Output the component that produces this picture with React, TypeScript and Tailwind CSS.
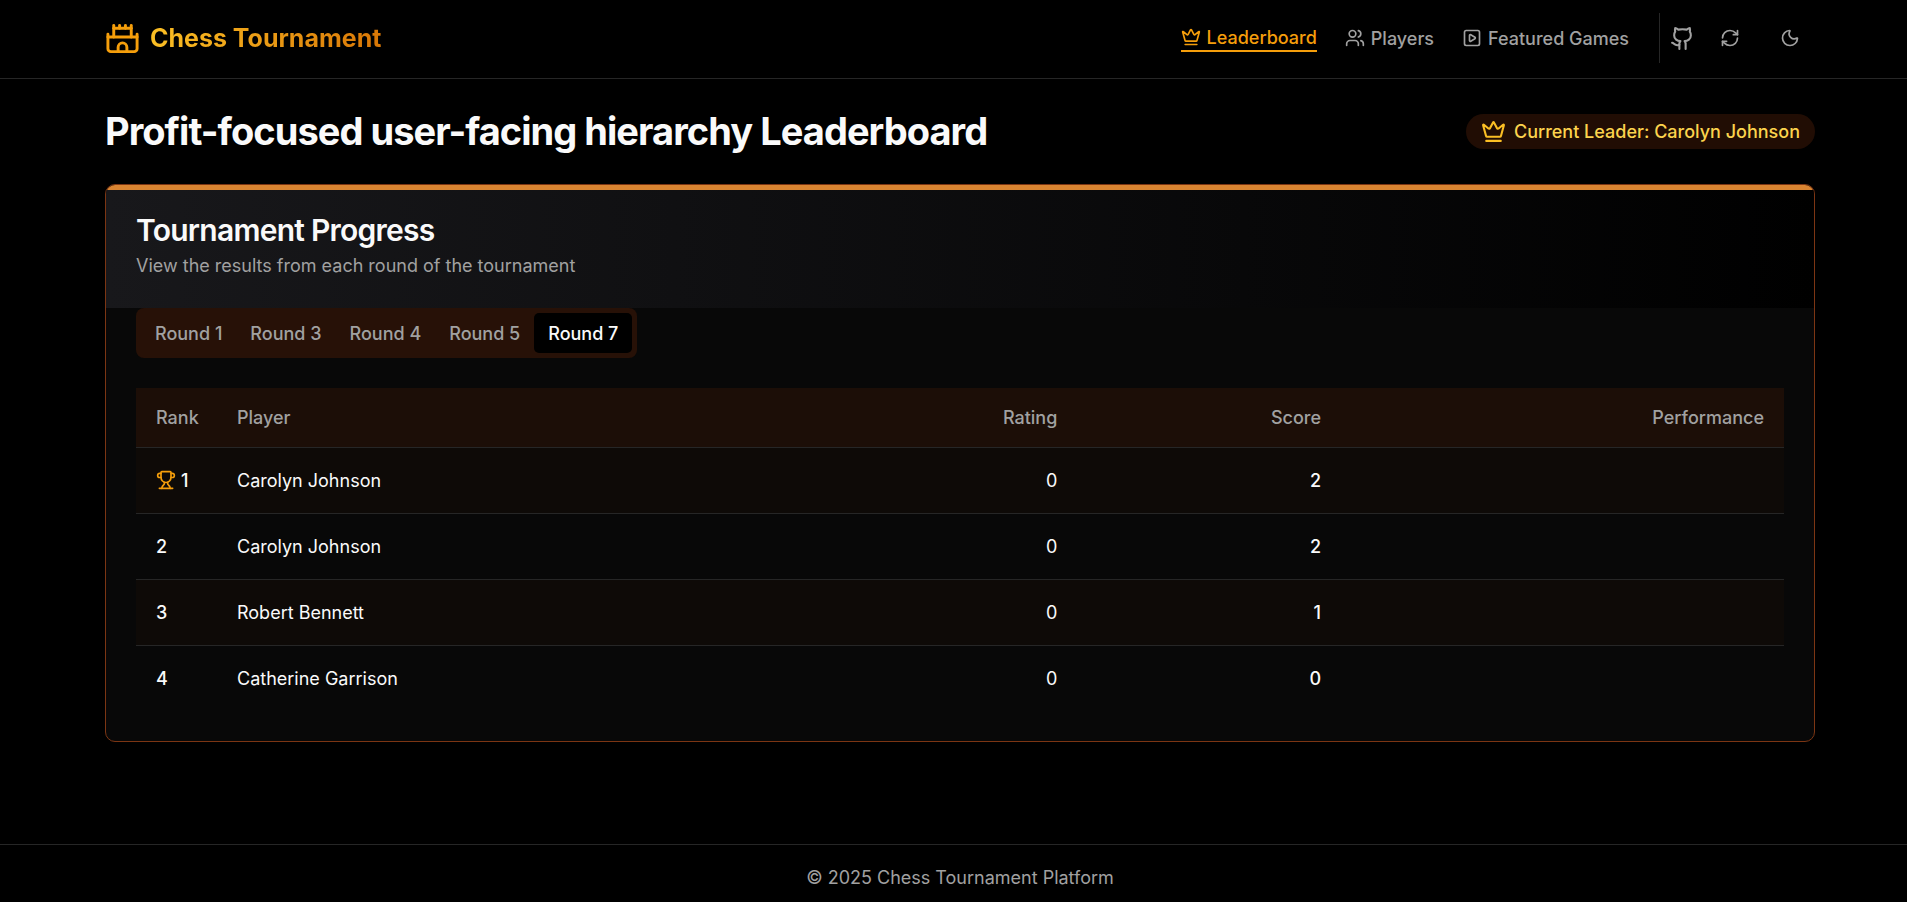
import { useState } from "react";
import { Castle, Crown, Github, Moon, RefreshCw, SquarePlay, Trophy, Users } from "lucide-react";

const rounds = [1, 3, 4, 5, 7];

const standings = [
  { rank: 1, player: "Carolyn Johnson", rating: 0, score: 2 },
  { rank: 2, player: "Carolyn Johnson", rating: 0, score: 2 },
  { rank: 3, player: "Robert Bennett", rating: 0, score: 1 },
  { rank: 4, player: "Catherine Garrison", rating: 0, score: 0 },
];

const container = "mx-auto w-full max-w-[1750px] px-5";

function Header() {
  return (
    <header className="border-b border-[#262626] pt-[13px] pb-[15px] pl-[13px]">
      <div className={`${container} flex items-center justify-between`}>
        <a href="#" className="flex items-center gap-[10px]">
          <Castle size={35} className="text-[#f59e0b]" />
          <span className="bg-linear-to-r/srgb from-[#fbbf24] to-[#d97706] bg-clip-text text-[25px] leading-[35px] font-bold text-transparent">
            Chess Tournament
          </span>
        </a>
        <div className="flex items-center">
          <nav className="flex items-center gap-[28px] pr-[30px] font-medium text-[#a1a1a1]">
            <a href="#leaderboard" className="flex items-center gap-[6px] border-b-2 border-[#f59e0b] text-[#f59e0b]">
              <Crown size={20} />
              Leaderboard
            </a>
            <a href="#players" className="flex items-center gap-[6px]">
              <Users size={20} />
              Players
            </a>
            <a href="#games" className="flex items-center gap-[6px]">
              <SquarePlay size={20} />
              Featured Games
            </a>
          </nav>
          <div className="flex items-center gap-[10px] border-l border-[#262626] pl-[10px] text-[#a1a1a1]">
            <a href="#github" aria-label="GitHub">
              <Github size={25} />
            </a>
            <button type="button" aria-label="Refresh" className="flex size-[50px] items-center justify-center">
              <RefreshCw size={20} />
            </button>
            <button type="button" aria-label="Toggle theme" className="flex size-[50px] items-center justify-center">
              <Moon size={20} />
            </button>
          </div>
        </div>
      </div>
    </header>
  );
}

function Standings() {
  return (
    <table className="w-full table-fixed border-collapse">
      <colgroup>
        <col className="w-[81px]" />
        <col />
        <col className="w-[16%]" />
        <col className="w-[16%]" />
        <col className="w-[443px]" />
      </colgroup>
      <thead>
        <tr className="h-[59px] border-b border-[#262626] bg-[#1c0e07] text-[#a1a1a1]">
          <th scope="col" className="px-5 text-left font-medium">Rank</th>
          <th scope="col" className="px-5 text-left font-medium">Player</th>
          <th scope="col" className="px-5 text-right font-medium">Rating</th>
          <th scope="col" className="px-5 text-right font-medium">Score</th>
          <th scope="col" className="px-5 text-right font-medium">Performance</th>
        </tr>
      </thead>
      <tbody>
        {standings.map((row) => (
          <tr key={row.rank} className="h-[66px] border-b border-[#262626] odd:bg-[#0e0a07] last:border-0">
            <td className="px-5 font-medium">
              <span className="flex items-center gap-[5px]">
                {row.rank === 1 && <Trophy size={20} className="text-[#f59e0b]" />}
                {row.rank}
              </span>
            </td>
            <td className="px-5">{row.player}</td>
            <td className="px-5 text-right">{row.rating}</td>
            <td className="px-5 text-right font-medium">{row.score}</td>
            <td className="px-5" />
          </tr>
        ))}
      </tbody>
    </table>
  );
}

export default function App() {
  const [active, setActive] = useState(7);
  return (
    <div className="flex min-h-screen flex-col bg-black font-['Inter',sans-serif] text-[18px] leading-[25px] text-[#fafafa]">
      <Header />
      <main className="grow pt-[30px] pb-[102px] pl-[13px]">
        <div className={container}>
          <div className="flex items-center justify-between">
            <h1 className="text-[38px] leading-[45px] font-bold tracking-tight">
              Profit-focused user-facing hierarchy Leaderboard
            </h1>
            <p className="flex items-center gap-[8px] rounded-full bg-[#210d04] px-[15px] py-[5px] font-medium text-[#fcd34d]">
              <Crown size={25} className="text-[#fbbf24]" />
              Current Leader: Carolyn Johnson
            </p>
          </div>
          <section className="mt-[30px] overflow-hidden rounded-[10px] border border-[#7c3513] bg-[#080808]">
            <div className="h-[5px] bg-[#d98431]" />
            <div className="bg-linear-to-r/srgb from-[#18181b] to-black px-[30px] pt-[22px] pb-[30px]">
              <h2 className="text-[30px] leading-[36px] font-semibold tracking-tight">Tournament Progress</h2>
              <p className="mt-[5px] text-[#a1a1a1]">View the results from each round of the tournament</p>
            </div>
            <div className="px-[30px] pb-[30px]">
              <div role="tablist" className="inline-flex h-[50px] items-center rounded-[8px] bg-[#271107] p-[5px] align-top">
                {rounds.map((round) => (
                  <button
                    key={round}
                    type="button"
                    role="tab"
                    aria-selected={round === active}
                    onClick={() => setActive(round)}
                    className={
                      round === active
                        ? "h-[40px] rounded-[5px] bg-black px-[14px] font-medium text-[#fafafa]"
                        : "h-[40px] rounded-[5px] px-[14px] font-medium text-[#a1a1a1]"
                    }
                  >
                    Round {round}
                  </button>
                ))}
              </div>
              <div className="mt-[30px]">
                <Standings />
              </div>
            </div>
          </section>
        </div>
      </main>
      <footer className="border-t border-[#262626] py-[20px] pl-[13px] text-center text-[#a1a1a1]">
        © 2025 Chess Tournament Platform
      </footer>
    </div>
  );
}
